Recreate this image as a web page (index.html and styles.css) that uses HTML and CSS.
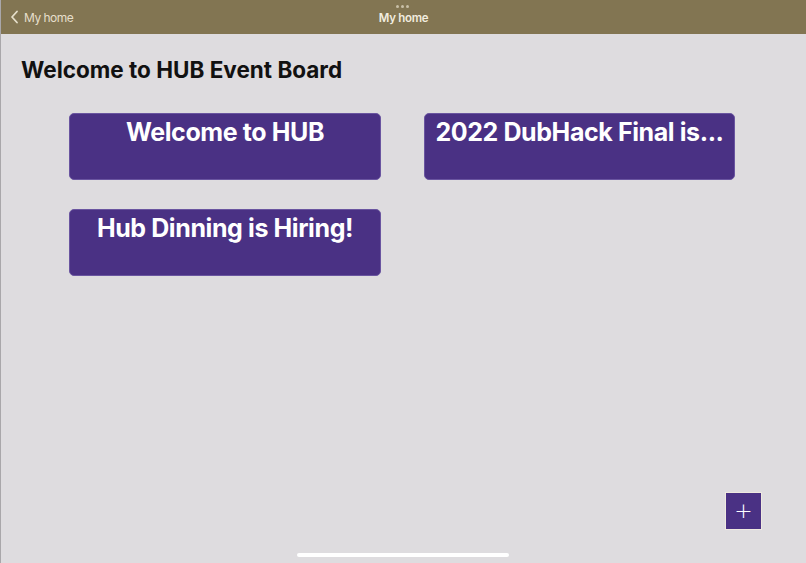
FILE: index.html
```html
<!DOCTYPE html>
<html lang="en">
<head>
  <meta charset="UTF-8">
  <meta name="viewport" content="width=device-width, initial-scale=1.0">
  <title>HUB Event Board</title>
  <link rel="stylesheet" href="styles.css">
</head>
<body>
  <header class="topbar">
    <a class="back" href="#">
      <svg width="9" height="14" viewBox="0 0 9 14"><path d="M7 1.5 L2 7 L7 12.5" fill="none" stroke="currentColor" stroke-width="1.8" stroke-linecap="round" stroke-linejoin="round"/></svg>
      <span>My home</span>
    </a>
    <div class="title">
      <div class="dots"><i></i><i></i><i></i></div>
      <span>My home</span>
    </div>
  </header>

  <main class="board">
    <h1>Welcome to HUB Event Board</h1>
    <!-- event cards -->
    <div class="events">
      <div class="event">Welcome to HUB</div>
      <div class="event">2022 DubHack Final is...</div>
      <div class="event">Hub Dinning is Hiring!</div>
    </div>
  </main>

  <button class="add">+</button>
  <div class="home-bar"></div>
</body>
</html>
```

FILE: styles.css
```css
* {
  box-sizing: border-box;
}

body {
  margin: 0;
  height: 563px;
  overflow: hidden;
  background-color: #dedcdf;
  font-family: Inter, "Noto Sans", sans-serif;
  border-left: 1px solid #a9a7aa;
}

.topbar {
  height: 34px;
  background-color: #827552;
  display: flex;
  align-items: center;
  position: relative;
  padding-left: 9px;
}

.back {
  display: flex;
  align-items: center;
  gap: 5px;
  color: #e6dfcb;
  text-decoration: none;
  font-size: 12px;
  letter-spacing: -0.5px;
}

.title {
  position: absolute;
  left: 0;
  right: 0;
  top: 5px;
  text-align: center;
  color: #f1ecdf;
  font-size: 11.5px;
  font-weight: 600;
  letter-spacing: -0.3px;
}

.dots {
  display: flex;
  justify-content: center;
  gap: 2px;
  height: 6px;
  margin-left: -2px;
}

.dots i {
  width: 3px;
  height: 3px;
  border-radius: 50%;
  background-color: #c9c0a8;
}

.board {
  padding: 22px 0 0 20px;
}

h1 {
  margin: 0;
  font-size: 22.5px;
  font-weight: 700;
  color: #111;
}

.events {
  display: grid;
  grid-template-columns: 312px 311px;
  column-gap: 43px;
  row-gap: 29px;
  margin: 30px 0 0 48px;
}

.event {
  height: 67px;
  background-color: #4a3184;
  border: 1px solid #6a55a0;
  border-radius: 5px;
  color: #fff;
  font-size: 25px;
  font-weight: 700;
  text-align: center;
  padding-top: 3px;
  letter-spacing: -0.4px;
}

.add {
  position: absolute;
  left: 725px;
  top: 492px;
  width: 37px;
  height: 38px;
  background-color: #4a3184;
  border: 1px solid #efe9e0;
  color: #fff;
  font-size: 22px;
  font-weight: 300;
  font-family: "DejaVu Sans", sans-serif;
  line-height: 30px;
  padding: 0;
}

.home-bar {
  position: absolute;
  left: 297px;
  top: 553px;
  width: 212px;
  height: 4px;
  border-radius: 2px;
  background-color: #fff;
}
```
